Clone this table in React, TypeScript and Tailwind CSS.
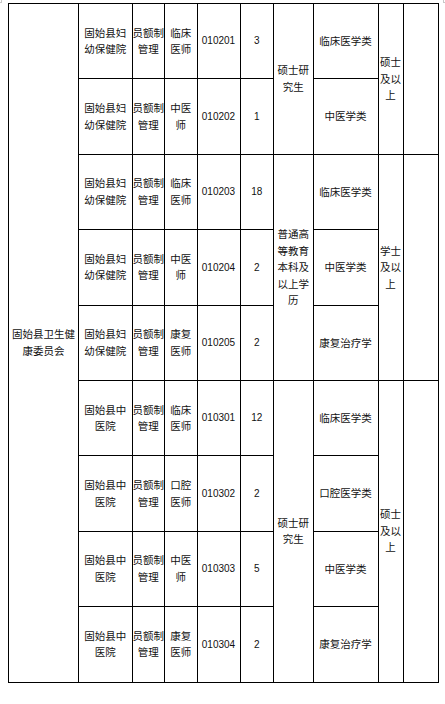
const rows = [
  { org: ["固始县妇", "幼保健院"], pos: ["临床", "医师"], code: "010201", n: "3", major: "临床医学类" },
  { org: ["固始县妇", "幼保健院"], pos: ["中医", "师"], code: "010202", n: "1", major: "中医学类" },
  { org: ["固始县妇", "幼保健院"], pos: ["临床", "医师"], code: "010203", n: "18", major: "临床医学类" },
  { org: ["固始县妇", "幼保健院"], pos: ["中医", "师"], code: "010204", n: "2", major: "中医学类" },
  { org: ["固始县妇", "幼保健院"], pos: ["康复", "医师"], code: "010205", n: "2", major: "康复治疗学" },
  { org: ["固始县中", "医院"], pos: ["临床", "医师"], code: "010301", n: "12", major: "临床医学类" },
  { org: ["固始县中", "医院"], pos: ["口腔", "医师"], code: "010302", n: "2", major: "口腔医学类" },
  { org: ["固始县中", "医院"], pos: ["中医", "师"], code: "010303", n: "5", major: "中医学类" },
  { org: ["固始县中", "医院"], pos: ["康复", "医师"], code: "010304", n: "2", major: "康复治疗学" },
];

// merged cells for 学历 / 学位 / last column, keyed by start row
const groups: Record<number, { span: number; edu: string[]; degree: string[] }> = {
  0: { span: 2, edu: ["硕士研", "究生"], degree: ["硕士", "及以", "上"] },
  2: { span: 3, edu: ["普通高", "等教育", "本科及", "以上学", "历"], degree: ["学士", "及以", "上"] },
  5: { span: 4, edu: ["硕士研", "究生"], degree: ["硕士", "及以", "上"] },
};

const widths = [70, 53.5, 32.5, 32.5, 43, 33.5, 39.5, 65, 25, 35];

function Lines({ lines }: { lines: string[] }) {
  return (
    <>
      {lines.map((l, i) => (
        <div key={i} className="whitespace-nowrap">
          {l}
        </div>
      ))}
    </>
  );
}

const cell = "border border-black p-0 text-center align-middle";

export default function App() {
  return (
    <div
      className="relative w-[445px] h-[704px] bg-white pt-[3px] pl-[8px] text-[#111] text-[10.5px] leading-[16.5px]"
      style={{ fontFamily: '"Noto Sans CJK SC", sans-serif' }}
    >
      {/* page corner marks */}
      <div className="absolute left-0 top-[2px] w-[2px] h-px bg-[#c8c8c8]" />
      <div className="absolute left-[1px] top-0 w-px h-[3px] bg-[#c8c8c8]" />
      <div className="absolute left-[443px] top-[2px] w-[2px] h-px bg-[#c8c8c8]" />
      <div className="absolute left-[443px] top-0 w-px h-[3px] bg-[#c8c8c8]" />

      <table className="border-collapse table-fixed w-[429.5px] h-[679px]">
        <colgroup>
          {widths.map((w, i) => (
            <col key={i} style={{ width: w }} />
          ))}
        </colgroup>
        <tbody>
          {rows.map((r, i) => (
            <tr key={r.code} className="h-[75.4px]">
              {i === 0 && (
                <td rowSpan={9} className={cell}>
                  <Lines lines={["固始县卫生健", "康委员会"]} />
                </td>
              )}
              <td className={cell}>
                <Lines lines={r.org} />
              </td>
              <td className={cell}>
                <Lines lines={["员额制", "管理"]} />
              </td>
              <td className={cell}>
                <Lines lines={r.pos} />
              </td>
              <td className={cell} style={{ fontFamily: '"Liberation Sans", sans-serif' }}>
                <span className="text-[10px]">{r.code}</span>
              </td>
              <td className={cell} style={{ fontFamily: '"Liberation Sans", sans-serif' }}>
                <span className="text-[10px]">{r.n}</span>
              </td>
              {groups[i] && (
                <td rowSpan={groups[i].span} className={cell}>
                  <Lines lines={groups[i].edu} />
                </td>
              )}
              <td className={cell}>{r.major}</td>
              {groups[i] && (
                <td rowSpan={groups[i].span} className={cell}>
                  <Lines lines={groups[i].degree} />
                </td>
              )}
              {groups[i] && <td rowSpan={groups[i].span} className={cell} />}
            </tr>
          ))}
        </tbody>
      </table>
    </div>
  );
}
